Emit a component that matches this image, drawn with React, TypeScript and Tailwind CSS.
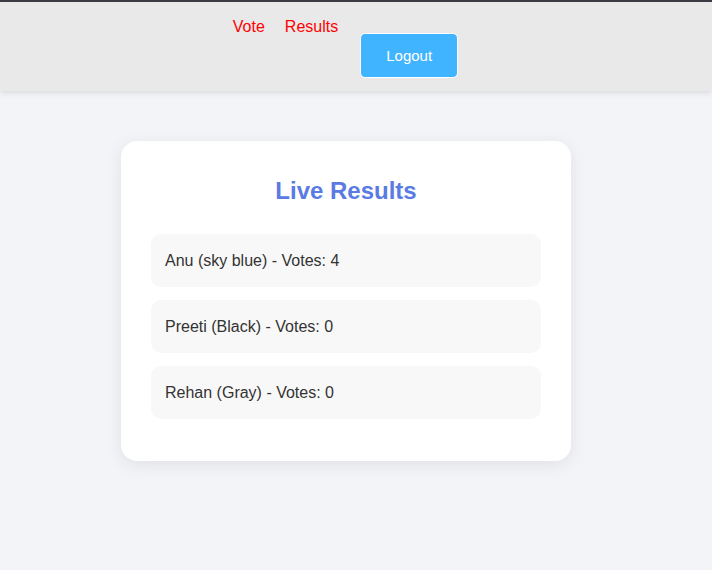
import React from 'react';

const candidates = [
  { name: 'Anu', color: 'sky blue', votes: 4 },
  { name: 'Preeti', color: 'Black', votes: 0 },
  { name: 'Rehan', color: 'Gray', votes: 0 },
];

export default function App() {
  return (
    <div className="min-h-[570px] bg-[#f3f4f8] font-['Liberation_Sans',Arial,sans-serif]">
      {/* Navbar */}
      <nav className="relative z-10 h-[91px] border-t-2 border-[#3b3b44] bg-[#e9e9e9] shadow-[0_2px_6px_rgba(0,0,0,0.1)]">
        <div className="flex items-start justify-center pr-[21px] pt-[15px]">
          <a href="#" className="mt-[1px] text-[16px] leading-[18px] text-[#ff0000]">
            Vote
          </a>
          <a href="#" className="ml-[20px] mt-[1px] text-[16px] leading-[18px] text-[#ff0000]">
            Results
          </a>
          <button className="ml-[22px] mt-[16px] w-[98px] rounded-[5px] border border-white bg-[#41b4ff] py-[13px] text-center text-[15px] leading-[17px] text-white">
            Logout
          </button>
        </div>
      </nav>

      {/* Results card */}
      <main className="flex justify-center pr-[20px] pt-[50px]">
        <div className="w-[450px] rounded-2xl bg-white px-[30px] pb-[42px] pt-[36px] shadow-[0_4px_18px_rgba(0,0,0,0.08)]">
          <h2 className="mb-[29px] text-center text-[24px] font-bold leading-[28px] text-[#5a7be3]">
            Live Results
          </h2>
          <div className="flex flex-col gap-[13px]">
            {candidates.map((c) => (
              <div
                key={c.name}
                className="rounded-[10px] bg-[#f8f8f8] px-[14px] py-[15px] text-[16px] leading-[23px] text-[#333333]"
              >
                {c.name} ({c.color}) - Votes: {c.votes}
              </div>
            ))}
          </div>
        </div>
      </main>
    </div>
  );
}
